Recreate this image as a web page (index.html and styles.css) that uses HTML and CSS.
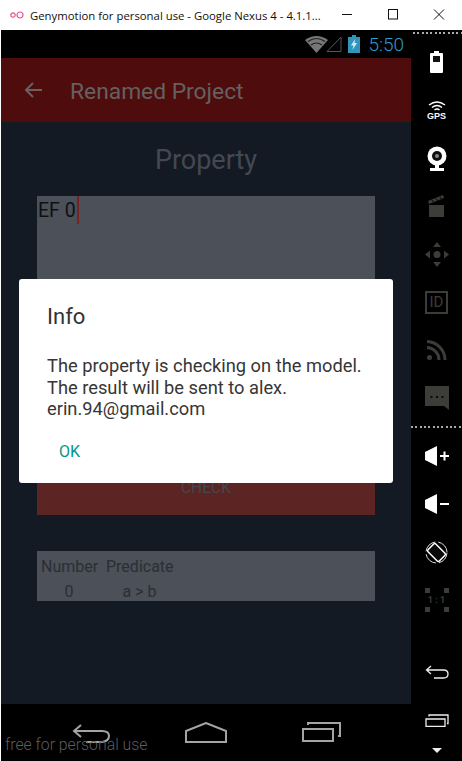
FILE: index.html
```html
<!DOCTYPE html>
<html lang="en">
<head>
    <meta charset="UTF-8">
    <title>Genymotion for personal use</title>
    <link rel="stylesheet" href="styles.css">
</head>
<body>
    <div class="titlebar">
        <svg class="logo" width="14" height="8" viewBox="0 0 14 8">
            <circle cx="3" cy="4" r="2.2" fill="none" stroke="#e8558f" stroke-width="1.2"/>
            <circle cx="10" cy="4" r="3" fill="none" stroke="#e8558f" stroke-width="1.2"/>
        </svg>
        <span class="wintitle">Genymotion for personal use - Google Nexus 4 - 4.1.1...</span>
        <div class="winbtns">
            <svg width="46" height="30" viewBox="0 0 46 30"><path d="M18 14.5h10" stroke="#111" fill="none"/></svg>
            <svg width="46" height="30" viewBox="0 0 46 30"><rect x="18.5" y="9.5" width="9" height="9.5" stroke="#111" fill="none"/></svg>
            <svg width="46" height="30" viewBox="0 0 46 30"><path d="M18 9.5l10 10M28 9.5l-10 10" stroke="#111" fill="none"/></svg>
        </div>
    </div>

    <div class="main">
        <div class="device">
            <div class="statusbar">
                <svg width="23" height="18" viewBox="0 0 23 18">
                    <path d="M0 5Q11.500 -3 23 5L11.500 18Z" fill="#777"/>
                    <path d="M3 6.500Q11.500 0.500 20 6.500M6 10Q11.500 6 17 10" stroke="#222" stroke-width="1.200" fill="none"/>
                </svg>
                <svg class="signal" width="16" height="16" viewBox="0 0 16 16"><path d="M15 1V15.500H1Z" fill="none" stroke="#555"/></svg>
                <svg class="batt" width="12" height="18" viewBox="0 0 12 18">
                    <path d="M4 0h4v2h4v16H0V2h4z" fill="#2f95bd"/>
                    <path d="M7 4L3 10.500h2.500L4.500 15 9 8H6.500z" fill="#d5e8f0"/>
                </svg>
                <span class="clock">5:50</span>
            </div>
            <div class="appbar">
                <svg width="18" height="16" viewBox="0 0 18 16"><path d="M9 1L2 8l7 7M2 8h16" stroke="#6b6060" stroke-width="2" fill="none"/></svg>
                <span class="apptitle">Renamed Project</span>
            </div>
            <div class="content">
                <h1 class="heading">Property</h1>
                <div class="editor"><span class="formula">EF 0</span><span class="cursor"></span></div>
                <div class="checkbtn">CHECK</div>
                <div class="predicates">
                    <span class="cell">Number</span><span class="cell">Predicate</span>
                    <span class="cell num">0</span><span class="cell pred">a &gt; b</span>
                </div>
            </div>
            <div class="navbar">
                <svg width="39" height="22" viewBox="0 0 39 22"><path d="M9 3L2 9l7 6M2 9h28q7 0 7 5t-7 6H14" stroke="#a4a4a4" stroke-width="2" fill="none"/></svg>
                <svg width="42" height="21" viewBox="0 0 42 21"><path d="M1 9L21 1l20 8v11H1z" stroke="#a4a4a4" stroke-width="2" fill="none"/></svg>
                <svg width="39" height="20" viewBox="0 0 39 20"><path d="M1 7h30v12H1zM6 3V1h32v13h-2" stroke="#a4a4a4" stroke-width="2" fill="none"/></svg>
            </div>
            <span class="watermark">free for personal use</span>

            <div class="dialog">
                <div class="dlgtitle">Info</div>
                <p class="dlgtext">The property is checking on the model.<br>The result will be sent to alex.<br>erin.94@gmail.com</p>
                <span class="dlgok">OK</span>
            </div>
        </div>

        <div class="sidebar">
            <div class="dots top"></div>
            <div class="slot">
                <svg width="13" height="22" viewBox="0 0 13 22"><path d="M4 0h5v2h3q1 0 1 1v18q0 1-1 1H1q-1 0-1-1V3q0-1 1-1h3z" fill="#fff"/><rect x="3" y="5" width="7" height="6" fill="#111"/></svg>
            </div>
            <div class="slot">
                <svg width="22" height="12" viewBox="0 0 22 12"><path d="M3 5Q11 -1 19 5M6 7.500Q11 3.500 16 7.500M8.500 10Q11 8 13.500 10" stroke="#fff" stroke-width="1.500" fill="none"/></svg>
                <span class="gps">GPS</span>
            </div>
            <div class="slot">
                <svg width="20" height="25" viewBox="0 0 20 25"><circle cx="10" cy="10" r="9.500" fill="#fff"/><circle cx="10" cy="10" r="5" fill="#111"/><circle cx="10" cy="10" r="2" fill="#888"/><path d="M8 19h4v3h5v3H3v-3h5z" fill="#fff"/></svg>
            </div>
            <div class="slot">
                <svg width="17" height="22" viewBox="0 0 17 22"><path d="M0 6L15 0l1 3L1 9z" fill="#3c3c38"/><path d="M4 5l2 3M8 3.500l2 3M12 2l2 3" stroke="#0a0a0a"/><rect x="1" y="10" width="15" height="12" fill="#3c3c38"/></svg>
            </div>
            <div class="slot">
                <svg width="24" height="25" viewBox="0 0 24 25" fill="#3c3c38"><path d="M12 0l4 5H8zM12 25l-4-5h8zM0 12.500l5-4v8zM24 12.500l-5 4v-8z"/><circle cx="12" cy="12.500" r="3.500"/></svg>
            </div>
            <div class="slot">
                <div class="idbox">ID</div>
            </div>
            <div class="slot">
                <svg width="20" height="20" viewBox="0 0 20 20"><path d="M0 1.500A18.500 18.500 0 0 1 18 20M0 7.500A12.500 12.500 0 0 1 12 20" stroke="#3c3c38" stroke-width="3" fill="none"/><circle cx="2.500" cy="17.500" r="2.500" fill="#3c3c38"/></svg>
            </div>
            <div class="slot">
                <svg width="24" height="24" viewBox="0 0 24 24"><path d="M0 0h24v24l-5-4H0z" fill="#3c3c38"/><path d="M5.500 10h2v2h-2zM11 10h2v2h-2zM16.500 10h2v2h-2z" fill="#0a0a0a"/></svg>
            </div>
            <div class="dots"></div>
            <div class="slot">
                <svg width="24" height="20" viewBox="0 0 24 20"><path d="M0 6L12 0v20L0 14z" fill="#fff"/><path d="M15 10h9M19.500 5.500v9" stroke="#fff" stroke-width="2"/></svg>
            </div>
            <div class="slot">
                <svg width="24" height="20" viewBox="0 0 24 20"><path d="M0 6L12 0v20L0 14z" fill="#fff"/><path d="M15 10h9" stroke="#fff" stroke-width="2"/></svg>
            </div>
            <div class="slot">
                <svg width="23" height="23" viewBox="0 0 23 23"><circle cx="11.500" cy="11.500" r="10.500" stroke="#ddd" fill="none" stroke-dasharray="14 3"/><rect x="6" y="3.500" width="11" height="16" rx="1.500" transform="rotate(-45 11.500 11.500)" fill="#0a0a0a" stroke="#fff" stroke-width="1.500"/></svg>
            </div>
            <div class="slot">
                <div class="ratio">
                    <svg width="24" height="24" viewBox="0 0 24 24" fill="#3c3c38"><path d="M0 0h5v5H0zM19 0h5v5h-5zM0 19h5v5H0zM19 19h5v5h-5z"/></svg>
                    <span class="ratiotext">1 : 1</span>
                </div>
            </div>
            <div class="spacer"></div>
            <div class="slot">
                <svg width="24" height="14" viewBox="0 0 24 14"><path d="M6 1L1.500 5 6 9M1.500 5h17q4.500 0 4.500 4t-4.500 4H9" stroke="#eee" stroke-width="1.300" fill="none"/></svg>
            </div>
            <div class="slot">
                <svg width="24" height="13" viewBox="0 0 24 13"><path d="M1 5h19v7.500H1zM4 2.500V1h19v8.500h-1" stroke="#eee" stroke-width="1.300" fill="none"/></svg>
            </div>
            <div class="slot small">
                <svg width="10" height="5" viewBox="0 0 10 5"><path d="M0 0h10L5 5z" fill="#eee"/></svg>
            </div>
        </div>
    </div>
</body>
</html>
```

FILE: styles.css
```css
html, body{
    margin: 0;
    height: 100%;
}
body{
    width: 462px;
    height: 761px;
    overflow: hidden;
    background: #fff;
    font-family: Roboto, sans-serif;
}

/* window frame */
.titlebar{
    display: flex;
    align-items: center;
    height: 30px;
}
.logo{
    flex: none;
    margin-left: 10px;
}
.wintitle{
    margin-left: 6px;
    font-family: "Open Sans", sans-serif;
    font-size: 11.350px;
    white-space: nowrap;
    color: #111;
}
.winbtns{
    display: flex;
    flex: none;
    margin-left: auto;
}
.winbtns svg{
    flex: none;
}
.main{
    display: flex;
    height: 731px;
    padding-left: 1px;
}

/* phone screen */
.device{
    position: relative;
    display: flex;
    flex-direction: column;
    width: 410px;
    background: #000;
}
.statusbar{
    display: flex;
    align-items: center;
    justify-content: flex-end;
    height: 28px;
    padding-right: 7px;
}
.signal{
    margin-left: -2px;
}
.batt{
    margin-left: 6px;
}
.clock{
    margin-left: 8px;
    font-size: 19px;
    font-weight: 300;
    color: #2c9bca;
}
.appbar{
    display: flex;
    align-items: center;
    height: 64px;
    padding-left: 23px;
    background: #4f0c0c;
}
.apptitle{
    margin-left: 28px;
    padding-top: 3px;
    font-size: 22.800px;
    color: #656060;
}
.content{
    flex: 1;
    padding: 23px 36px 0;
    background: #141a24;
}
.heading{
    margin: 0 0 21px;
    font-size: 27px;
    font-weight: 400;
    line-height: 30px;
    text-align: center;
    color: #434852;
}
.editor{
    display: flex;
    align-items: flex-start;
    height: 265px;
    background: #4c5058;
}
.formula{
    padding-left: 1px;
    font-size: 19.500px;
    line-height: 30px;
    color: #0e1014;
}
.cursor{
    width: 2px;
    height: 28px;
    margin-left: 1px;
    background: #7a2222;
}
.checkbtn{
    height: 54px;
    padding-top: 18px;
    box-sizing: border-box;
    font-size: 15.600px;
    line-height: 18px;
    text-align: center;
    color: #43474f;
    background: #5c2523;
}
.predicates{
    display: grid;
    grid-template-columns: 65px 1fr;
    align-content: start;
    height: 50px;
    margin-top: 36px;
    padding: 3px 0 0 4px;
    box-sizing: border-box;
    font-size: 16px;
    line-height: 25px;
    color: #2b2e34;
    background: #4c5058;
}
.num{
    width: 56px;
    text-align: center;
}
.pred{
    width: 67px;
    text-align: center;
}
.navbar{
    display: grid;
    grid-template-columns: repeat(3, 115px);
    justify-content: center;
    justify-items: center;
    align-items: start;
    height: 57px;
    padding-top: 18px;
    box-sizing: border-box;
}
.watermark{
    position: absolute;
    left: 4px;
    bottom: 7px;
    font-size: 15.800px;
    font-weight: 300;
    color: #5c5c5c;
}

/* dialog sits over the page */
.dialog{
    position: absolute;
    left: 18px;
    top: 249px;
    width: 374px;
    height: 204px;
    box-sizing: border-box;
    padding: 23px 28px 0;
    border-radius: 3px;
    background: #fff;
}
.dlgtitle{
    font-size: 22px;
    line-height: 30px;
    color: #333;
}
.dlgtext{
    margin: 23px 0 0;
    font-size: 18.300px;
    line-height: 21.500px;
    white-space: nowrap;
    color: #363636;
}
.dlgok{
    display: block;
    margin: 22px 0 0 12px;
    font-size: 16px;
    line-height: 20px;
    color: #009688;
}

/* emulator side panel */
.sidebar{
    display: flex;
    flex-direction: column;
    width: 51px;
    background: #000;
}
.dots{
    flex: none;
    height: 10px;
    background: repeating-linear-gradient(90deg, #aaa 0 2px, transparent 2px 4.330px) 0 center / 100% 2px no-repeat;
}
.dots.top{
    height: 8px;
    background-position: 2px 2px;
}
.slot{
    flex: none;
    display: flex;
    flex-direction: column;
    align-items: center;
    justify-content: center;
    height: 48px;
}
.slot.small{
    height: 12px;
}
.spacer{
    flex: none;
    height: 24px;
}
.gps{
    font-family: "Liberation Sans", sans-serif;
    font-size: 9px;
    font-weight: 700;
    line-height: 9px;
    color: #fff;
}
.idbox{
    width: 19px;
    height: 19px;
    border: 2px solid #3c3c38;
    font-size: 15px;
    line-height: 19px;
    text-align: center;
    color: #3c3c38;
}
.ratio{
    position: relative;
    width: 24px;
    height: 24px;
}
.ratiotext{
    position: absolute;
    inset: 0;
    font-size: 9px;
    font-weight: 700;
    line-height: 24px;
    white-space: nowrap;
    text-align: center;
    color: #3c3c38;
}
```
